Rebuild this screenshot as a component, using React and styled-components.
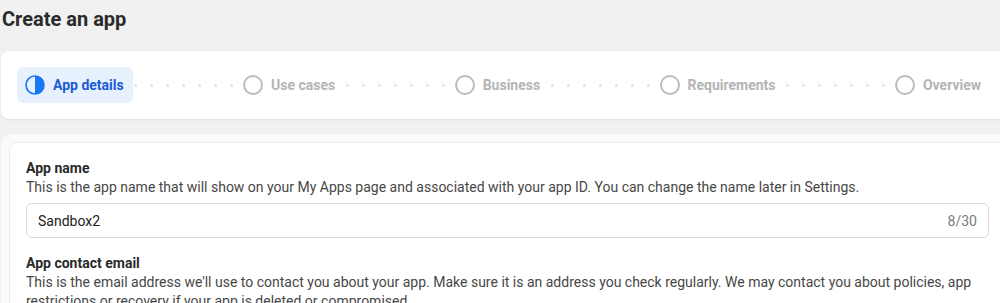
import React from 'react';
import styled, { createGlobalStyle } from 'styled-components';

const GlobalStyle = createGlobalStyle`
  html, body {
    margin: 0;
    padding: 0;
    background: #f1f1f1;
    font-family: Roboto, "Liberation Sans", Arial, sans-serif;
    overflow: hidden;
  }
`;

const Page = styled.div`
  width: 1011px;
  padding: 7px 0 0 1px;
  display: flex;
  flex-direction: column;
`;

const Title = styled.h1`
  margin: 0 0 20px 1px;
  font-size: 20px;
  line-height: 24px;
  font-weight: 700;
  color: #2b2b2b;
`;

const StepperCard = styled.div`
  background: #fff;
  border-radius: 8px;
  box-shadow: 0 1px 2px rgba(0, 0, 0, 0.08);
  padding: 16px 22px 16px 16px;
  display: flex;
  align-items: center;
`;

const Step = styled.div`
  display: flex;
  align-items: center;
  gap: 8px;
  height: 36px;
  padding: 0 9px 0 8px;
  border-radius: 6px;
  background: ${p => (p.$active ? '#e7f0fd' : 'transparent')};
  color: ${p => (p.$active ? '#1c5bd6' : '#b4b4b4')};
  font-size: 14px;
  font-weight: 700;
  white-space: nowrap;
`;

const Connector = styled.div`
  flex: 1;
  display: flex;
  justify-content: center;
  gap: 13px;
`;

const Dot = styled.span`
  width: 3px;
  height: 3px;
  border-radius: 50%;
  background: #e2e2e2;
`;

const OuterCard = styled.div`
  margin-top: 15px;
  background: #fafafa;
  border-radius: 10px 10px 0 0;
  padding: 8px 0 0 8px;
`;

const InnerCard = styled.div`
  background: #fff;
  border: 1px solid #ececec;
  border-radius: 8px;
  padding: 15px 16px 0 16px;
  display: flex;
  flex-direction: column;
`;

const Field = styled.div`
  display: flex;
  flex-direction: column;
  margin-bottom: 15px;
`;

const Label = styled.div`
  font-size: 14px;
  line-height: 20px;
  font-weight: 700;
  color: #2a2a2a;
`;

const Help = styled.div`
  font-size: 14px;
  line-height: 19px;
  color: #474747;
  width: 963px;
`;

const InputBox = styled.div`
  margin-top: 6px;
  width: 963px;
  box-sizing: border-box;
  height: 35px;
  border: 1px solid #d9d9d9;
  border-radius: 6px;
  display: flex;
  align-items: center;
  justify-content: space-between;
  padding: 0 11px 0 11px;
  font-size: 14px;
  color: #1c1c1c;
`;

const Counter = styled.span`
  color: #7a7a7a;
  font-size: 14px;
`;

const HalfIcon = () => (
  <svg width="20" height="20" viewBox="0 0 20 20">
    <circle cx="10" cy="10" r="9" fill="none" stroke="#1877f2" strokeWidth="1.6" />
    <path d="M10 1 A9 9 0 0 1 10 19 Z" fill="#1877f2" />
  </svg>
);

const EmptyIcon = () => (
  <svg width="20" height="20" viewBox="0 0 20 20">
    <circle cx="10" cy="10" r="9" fill="none" stroke="#bcbcbc" strokeWidth="2" />
  </svg>
);

const steps = ['App details', 'Use cases', 'Business', 'Requirements', 'Overview'];

const Dots = () => (
  <Connector>
    {Array.from({ length: 7 }).map((_, i) => (
      <Dot key={i} />
    ))}
  </Connector>
);

export default function App() {
  return (
    <>
      <GlobalStyle />
      <Page>
        <Title>Create an app</Title>
        <StepperCard>
          {steps.map((s, i) => (
            <React.Fragment key={s}>
              {i > 0 && <Dots />}
              <Step $active={i === 0}>
                {i === 0 ? <HalfIcon /> : <EmptyIcon />}
                {s}
              </Step>
            </React.Fragment>
          ))}
        </StepperCard>
        <OuterCard>
          <InnerCard>
            <Field>
              <Label>App name</Label>
              <Help>
                This is the app name that will show on your My Apps page and associated with your app ID. You can change the name later in Settings.
              </Help>
              <InputBox>
                <span>Sandbox2</span>
                <Counter>8/30</Counter>
              </InputBox>
            </Field>
            <Field>
              <Label>App contact email</Label>
              <Help>
                This is the email address we'll use to contact you about your app. Make sure it is an address you check regularly. We may contact you about policies, app restrictions or recovery if your app is deleted or compromised.
              </Help>
            </Field>
          </InnerCard>
        </OuterCard>
      </Page>
    </>
  );
}
